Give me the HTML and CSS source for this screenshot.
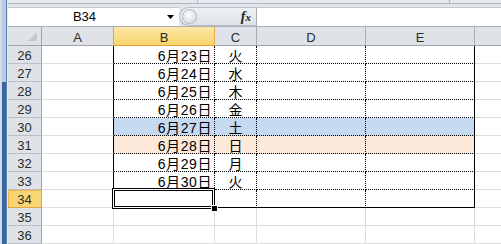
FILE: index.html
```html
<!DOCTYPE html>
<html lang="ja">
<head>
<meta charset="utf-8">
<title>Sheet</title>
<link rel="stylesheet" href="styles.css">
</head>
<body>
<div class="window">
  <div class="frame"></div>
  <div class="main">
    <div class="topedge"><span class="seg s1"></span><span class="seg s2"></span><span class="seg s3"></span></div>
    <div class="fbar">
      <div class="namebox">
        <span class="nb-text">B34</span>
        <svg class="nb-arrow" width="7" height="4" viewBox="0 0 7 4"><polygon points="0,0 7,0 3.5,4" fill="#000"/></svg>
      </div>
      <div class="knobarea">
        <span class="knob"></span>
        <span class="fx"><i>f</i><i class="fxx">x</i></span>
      </div>
      <div class="input"></div>
    </div>
    <div class="sheet">
      <div class="corner"><svg width="9" height="9" viewBox="0 0 9 9"><polygon points="9,0 9,9 0,9" fill="#c4c9d0"/></svg></div>
      <div class="ch">A</div><div class="ch sel">B</div><div class="ch">C</div><div class="ch">D</div><div class="ch">E</div><div class="ch"></div>

      <div class="rh">26</div><div class="c edge"></div><div class="c t num">6月23日</div><div class="c t day">火</div><div class="c t"></div><div class="c t last"></div><div class="c"></div>
      <div class="rh">27</div><div class="c edge"></div><div class="c t num">6月24日</div><div class="c t day">水</div><div class="c t"></div><div class="c t last"></div><div class="c"></div>
      <div class="rh">28</div><div class="c edge"></div><div class="c t num">6月25日</div><div class="c t day">木</div><div class="c t"></div><div class="c t last"></div><div class="c"></div>
      <div class="rh">29</div><div class="c edge"></div><div class="c t num">6月26日</div><div class="c t day">金</div><div class="c t"></div><div class="c t last"></div><div class="c"></div>
      <div class="rh">30</div><div class="c edge"></div><div class="c t num blue">6月27日</div><div class="c t day blue">土</div><div class="c t blue"></div><div class="c t last blue"></div><div class="c"></div>
      <div class="rh">31</div><div class="c edge"></div><div class="c t num peach">6月28日</div><div class="c t day peach">日</div><div class="c t peach"></div><div class="c t last peach"></div><div class="c"></div>
      <div class="rh">32</div><div class="c edge"></div><div class="c t num">6月29日</div><div class="c t day">月</div><div class="c t"></div><div class="c t last"></div><div class="c"></div>
      <div class="rh">33</div><div class="c edge"></div><div class="c t num">6月30日</div><div class="c t day">火</div><div class="c t"></div><div class="c t last"></div><div class="c"></div>
      <div class="rh sel">34</div><div class="c edge"></div><div class="c t bot"></div><div class="c t bot"></div><div class="c t bot"></div><div class="c t last bot"></div><div class="c"></div>
      <div class="rh">35</div><div class="c"></div><div class="c"></div><div class="c"></div><div class="c"></div><div class="c"></div><div class="c"></div>
      <div class="rh">36</div><div class="c"></div><div class="c"></div><div class="c"></div><div class="c"></div><div class="c"></div><div class="c"></div>

      <div class="selection"></div>
      <div class="handle"></div>
    </div>
  </div>
</div>
</body>
</html>
```
FILE: styles.css
```css
html, body {
  margin: 0;
  padding: 0;
  background: #fff;
}
.window {
  width: 501px;
  height: 244px;
  overflow: hidden;
  display: flex;
}
.frame {
  width: 8px;
  flex: 0 0 8px;
  background:
    linear-gradient(to right, #d2dce8 0 2px, transparent 2px 6px, #5f80ab 6px 7px, #e6eaef 7px 8px),
    linear-gradient(to bottom, #b8cbe2 0 82px, #3866a0 82px);
}
.main {
  flex: 1;
  min-width: 0;
  display: flex;
  flex-direction: column;
}
.topedge {
  height: 4px;
  box-sizing: border-box;
  border-bottom: 1px solid #b1b8c2;
  background: #e6e9ee;
  display: flex;
}
.seg {
  box-sizing: border-box;
  height: 3px;
}
.s1 { width: 190px; border-right: 1px solid #b1b8c2; }
.s2 { width: 252px; border-right: 1px solid #b1b8c2; }
.s3 { flex: 1; }

.fbar {
  height: 26px;
  box-sizing: border-box;
  padding-top: 3px;
  border-bottom: 1px solid #a9b0ba;
  background: #e3e7ec;
  display: flex;
}
.namebox {
  width: 171px;
  height: 19px;
  box-sizing: border-box;
  border-top: 1px solid #c3c9d1;
  background: #fff;
  display: flex;
  align-items: center;
}
.nb-text {
  width: 153px;
  text-align: center;
  font-family: "Liberation Sans", Arial, sans-serif;
  font-size: 13px;
  line-height: 18px;
  color: #000;
}
.nb-arrow {
  margin-left: 6px;
  display: block;
}
.knobarea {
  width: 77px;
  height: 19px;
  box-sizing: border-box;
  border: 1px solid #b7bec7;
  border-right: none;
  border-radius: 10px 0 0 10px;
  background: linear-gradient(#eef0f3, #dde1e6);
  display: flex;
  align-items: center;
}
.knob {
  width: 13px;
  height: 13px;
  margin-left: 2px;
  border-radius: 50%;
  border: 1px solid #b3bac3;
  background: radial-gradient(circle at 45% 40%, #fbfcfd, #cfd4db);
}
.fx {
  margin-left: auto;
  margin-right: 5px;
  font-family: "Liberation Serif", "Times New Roman", serif;
  font-weight: bold;
  font-size: 14px;
  line-height: 14px;
  color: #222;
}
.fxx {
  font-size: 11px;
}
.input {
  flex: 1;
  height: 19px;
  box-sizing: border-box;
  border-top: 1px solid #c3c9d1;
  border-left: 1px solid #a9b0ba;
  background: #fff;
}

.sheet {
  position: relative;
  display: grid;
  grid-template-columns: 34px 72px 101px 42px 109px 109px 34px;
  grid-template-rows: 19px repeat(11, 18px);
}
.corner {
  box-sizing: border-box;
  background: #dfe3e8;
  border-right: 1px solid #9da6b0;
  border-bottom: 1px solid #9da6b0;
  display: flex;
  align-items: flex-end;
  justify-content: flex-end;
  padding: 0 4px 4px 0;
}
.corner svg { display: block; }
.ch {
  box-sizing: border-box;
  background: #dfe3e8;
  border-right: 1px solid #a5adb7;
  border-bottom: 1px solid #9da6b0;
  font-family: "Liberation Sans", Arial, sans-serif;
  font-size: 13px;
  line-height: 17px;
  padding-top: 2px;
  text-align: center;
  color: #2b2b2b;
}
.ch.sel {
  background: linear-gradient(#fce7a6, #f8d46e);
  border-right-color: #e8b14a;
  border-bottom-color: #ec9f35;
}
.rh {
  box-sizing: border-box;
  background: #dfe3e8;
  border-right: 1px solid #9da6b0;
  border-bottom: 1px solid #b9c0c8;
  font-family: "Liberation Sans", Arial, sans-serif;
  font-size: 13px;
  line-height: 17px;
  padding-top: 1px;
  text-align: center;
  color: #2b2b2b;
}
.rh.sel {
  background: #f8d575;
  border-right-color: #e9a43a;
  border-bottom-color: #e9a43a;
  box-shadow: inset 1px 1px 0 #eeb24f;
}
.c {
  box-sizing: border-box;
  background: #fff;
  border-right: 1px solid #dadcdd;
  border-bottom: 1px solid #dadcdd;
  font-family: "Liberation Sans", "Noto Sans CJK JP", sans-serif;
  font-size: 14px;
  line-height: 16px;
  padding-top: 2px;
  color: #000;
  white-space: nowrap;
  overflow: visible;
}
.c.edge { border-right-color: #000; }
.c.t {
  border-right: 1px dotted #000;
  border-bottom: 1px dotted #000;
}
.c.t.last { border-right: 1px solid #000; }
.c.t.bot { border-bottom: 1px solid #000; }
.c.num { text-align: right; padding-right: 2px; letter-spacing: 0.6px; }
.c.day { text-align: center; }
.c.blue { background: #c5d9f1; }
.c.peach { background: #fde9d9; }

.selection {
  position: absolute;
  left: 104px;
  top: 161px;
  width: 103px;
  height: 21px;
  box-sizing: border-box;
  border: 1px solid #000;
  box-shadow: inset 0 0 0 1px #fff, inset 0 0 0 2px #000;
}
.handle {
  position: absolute;
  left: 203px;
  top: 178px;
  width: 5px;
  height: 5px;
  background: #000;
  border: 1px solid #fff;
}
```
